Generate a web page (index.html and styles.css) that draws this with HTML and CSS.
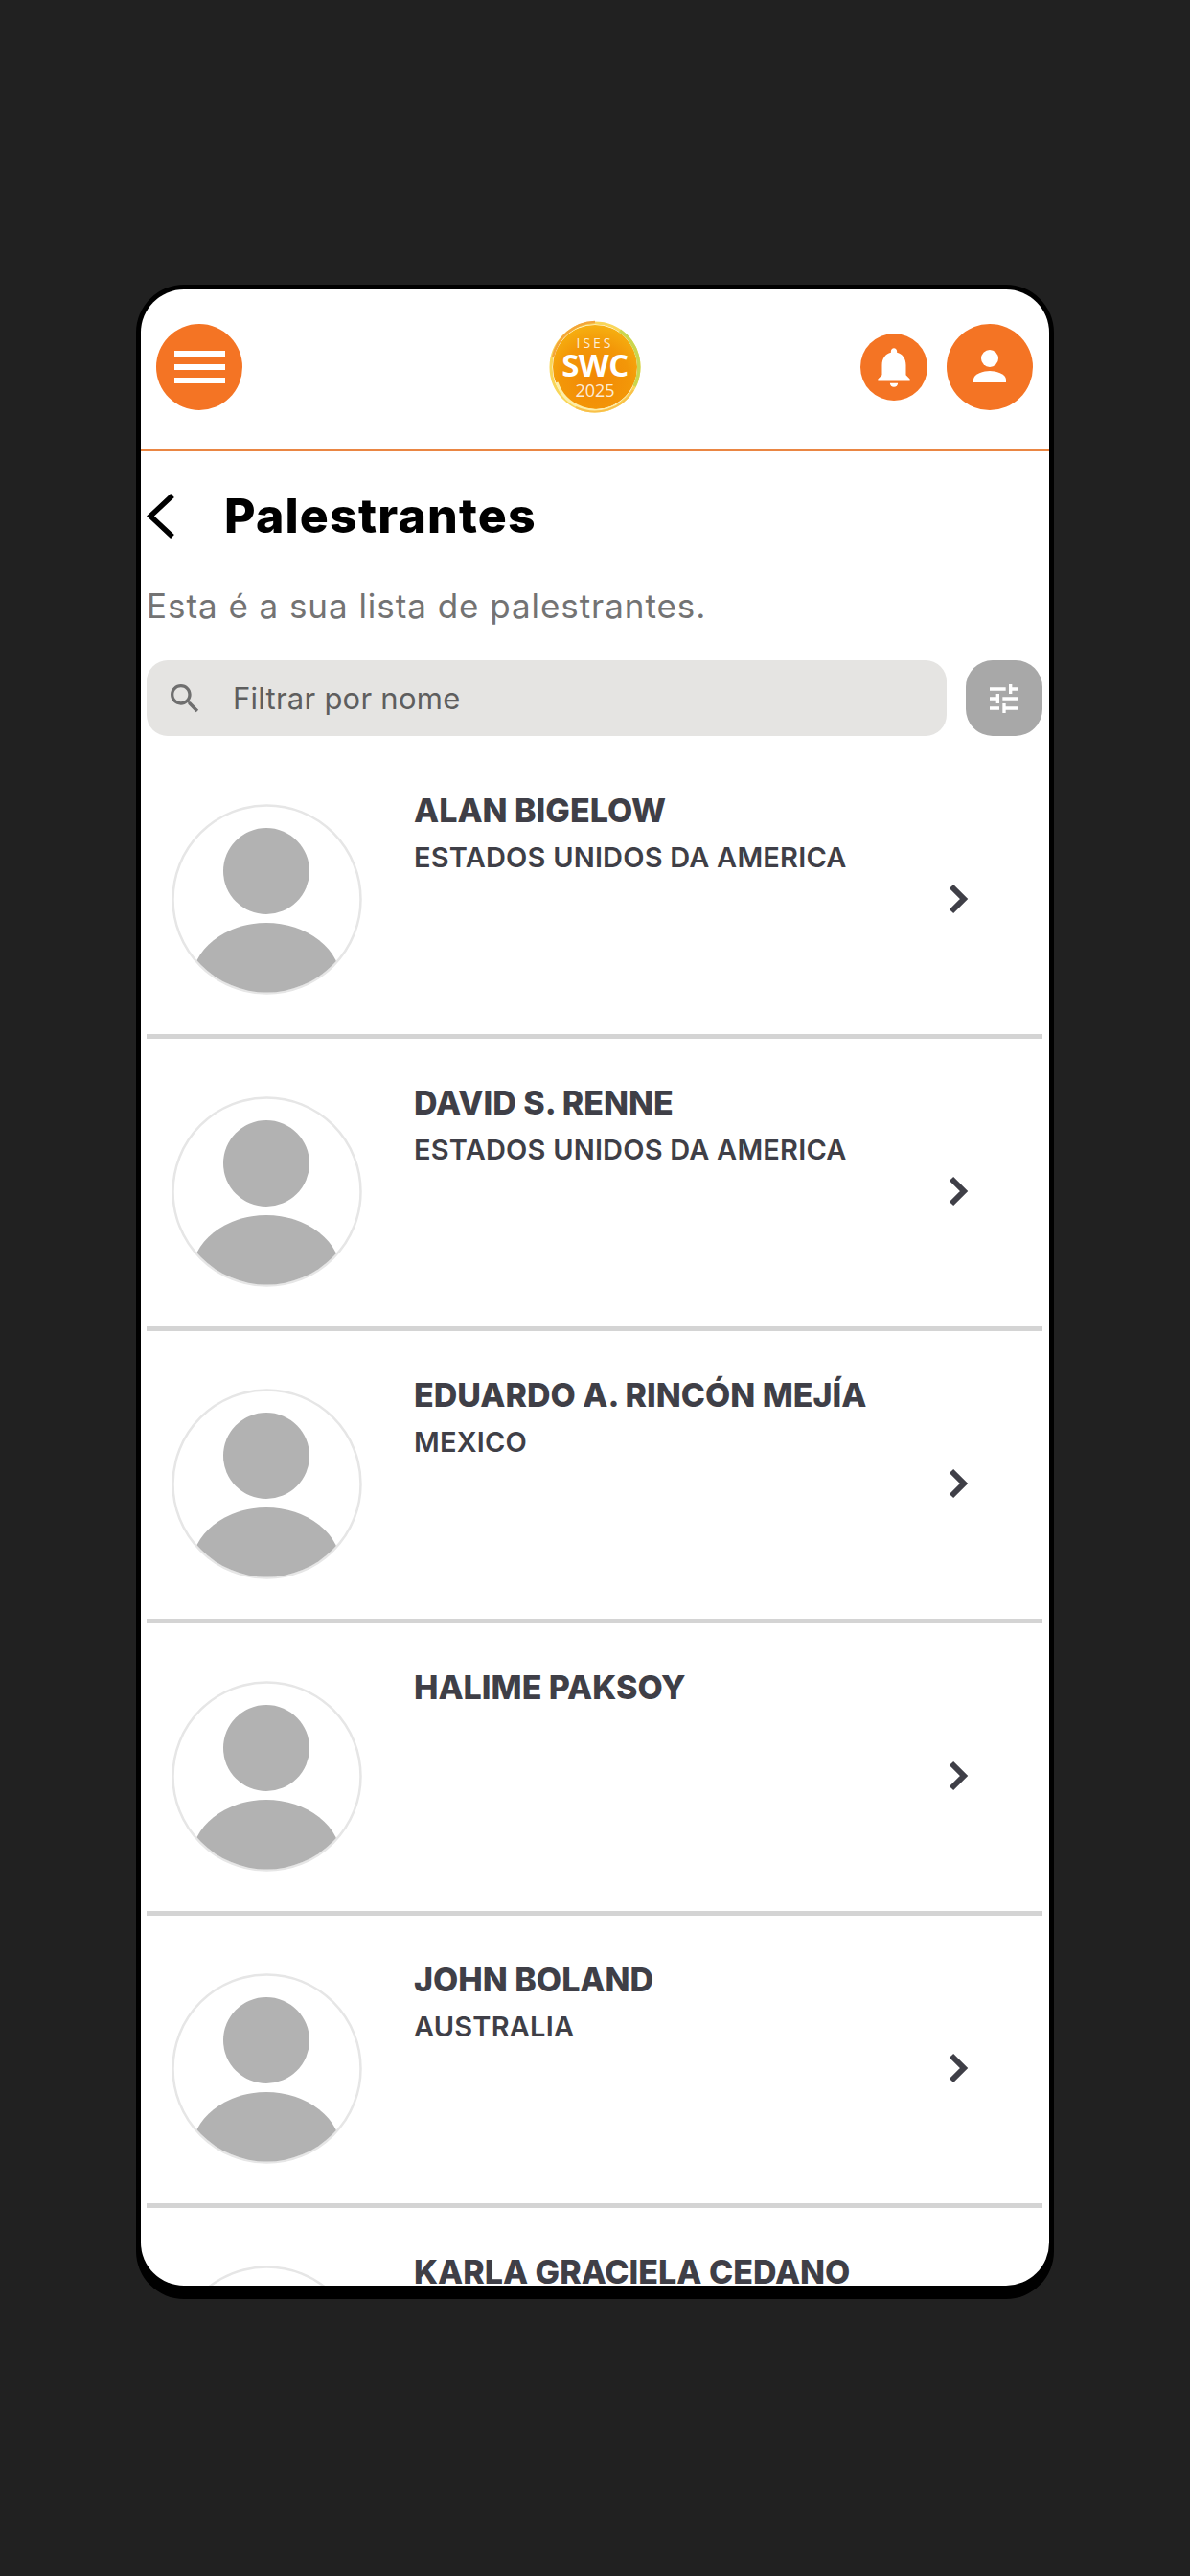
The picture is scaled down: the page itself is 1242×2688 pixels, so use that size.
FILE: index.html
```html
<!DOCTYPE html>
<html>
  <head>
    <meta charset="utf-8">
    <title>Palestrantes</title>
    <link rel="stylesheet" href="styles.css">
  </head>
  <body>
    <svg class="defs" width="0" height="0">
      <defs>
        <clipPath id="avatarClip"><circle cx="99.5" cy="99.5" r="97"></circle></clipPath>
        <symbol id="avatar" viewBox="0 0 199 199">
          <circle cx="99.5" cy="99.5" r="98" fill="#ffffff" stroke="#e6e6e6" stroke-width="2.5"></circle>
          <circle cx="99" cy="70" r="45" fill="#b2b2b2"></circle>
          <ellipse cx="99" cy="186" rx="78" ry="62" fill="#b2b2b2" clip-path="url(#avatarClip)"></ellipse>
        </symbol>
        <symbol id="chevron" viewBox="0 0 24 34">
          <polyline points="5,4 18,17 5,30" fill="none" stroke="#3f3f47" stroke-width="6"></polyline>
        </symbol>
        <radialGradient id="logoFill" cx="0.5" cy="0.65" r="0.7">
          <stop offset="0" stop-color="#f28805"></stop>
          <stop offset="0.6" stop-color="#f39708"></stop>
          <stop offset="1" stop-color="#f7b512"></stop>
        </radialGradient>
      </defs>
    </svg>

    <div class="phone">
      <div class="screen">
        <header class="topbar">
          <button class="round-btn menu-btn">
            <span></span>
            <span></span>
            <span></span>
          </button>
          <svg class="logo" viewBox="0 0 100 100">
            <circle cx="50" cy="50" r="44" fill="url(#logoFill)"></circle>
            <circle cx="50" cy="50" r="46" fill="none" stroke="#f9d659" stroke-width="3"></circle>
            <path d="M10 66 A44 44 0 0 0 74 89" fill="none" stroke="#fdeea8" stroke-width="3"></path>
            <path d="M76 12 A46 46 0 0 1 91 70" fill="none" stroke="#c9d64f" stroke-width="3.5"></path>
            <path d="M6 40 A46 46 0 0 1 50 3" fill="none" stroke="#f4a63a" stroke-width="2.5"></path>
            <path d="M30 92 A47 47 0 0 0 90 74" fill="none" stroke="#f9c04a" stroke-width="2"></path>
            <text class="logo-small" x="50" y="30">ISES</text>
            <text class="logo-big" x="50" y="60">SWC</text>
            <text class="logo-year" x="50" y="81">2025</text>
          </svg>
          <div class="top-actions">
            <button class="round-btn bell-btn">
              <svg viewBox="0 0 24 24" width="50" height="50"><path fill="#ffffff" d="M12 22c1.1 0 2-.9 2-2h-4c0 1.1.89 2 2 2zm6-6v-5c0-3.07-1.64-5.64-4.5-6.32V4c0-.83-.67-1.5-1.5-1.5s-1.5.67-1.5 1.5v.68C7.63 5.36 6 7.92 6 11v5l-2 2v1h16v-1l-2-2z"></path></svg>
            </button>
            <button class="round-btn user-btn">
              <svg viewBox="0 0 90 90" width="90" height="90">
                <circle cx="45" cy="36" r="9" fill="#ffffff"></circle>
                <path fill="#ffffff" d="M28 61v-3c0-6 11-9 17-9s17 3 17 9v3z"></path>
              </svg>
            </button>
          </div>
        </header>

        <main class="content">
          <div class="title-row">
            <svg class="back" viewBox="0 0 29 49" width="29" height="49">
              <polyline points="27,3 4,24.5 27,46" fill="none" stroke="#000000" stroke-width="5.5"></polyline>
            </svg>
            <h1>Palestrantes</h1>
          </div>
          <p class="intro">Esta é a sua lista de palestrantes.</p>

          <div class="search-row">
            <div class="search">
              <svg viewBox="0 0 24 24" width="40" height="40"><path fill="#6f6f6f" d="M15.5 14h-.79l-.28-.27C15.41 12.59 16 11.11 16 9.5 16 5.91 13.09 3 9.5 3S3 5.91 3 9.5 5.91 16 9.5 16c1.61 0 3.09-.59 4.23-1.57l.27.28v.79l5 4.99L20.49 19l-4.99-5zm-6 0C7.01 14 5 11.99 5 9.5S7.01 5 9.5 5 14 7.01 14 9.5 11.99 14 9.5 14z"></path></svg>
              <span>Filtrar por nome</span>
            </div>
            <button class="filter-btn">
              <svg viewBox="0 0 24 24" width="40" height="40"><path fill="#ffffff" d="M3 17v2h6v-2H3zM3 5v2h10V5H3zm10 16v-2h8v-2h-8v-2h-2v6h2zM7 9v2H3v2h4v2h2V9H7zm14 4v-2H11v2h10zm-6-4h2V7h4V5h-4V3h-2v6z"></path></svg>
            </button>
          </div>

          <div class="speakers">
            <div class="speaker">
              <svg class="avatar"><use href="#avatar"></use></svg>
              <div class="speaker-text">
                <div class="speaker-name">ALAN BIGELOW</div>
                <div class="speaker-country">ESTADOS UNIDOS DA AMERICA</div>
              </div>
              <svg class="arrow"><use href="#chevron"></use></svg>
            </div>
            <div class="speaker">
              <svg class="avatar"><use href="#avatar"></use></svg>
              <div class="speaker-text">
                <div class="speaker-name">DAVID S. RENNE</div>
                <div class="speaker-country">ESTADOS UNIDOS DA AMERICA</div>
              </div>
              <svg class="arrow"><use href="#chevron"></use></svg>
            </div>
            <div class="speaker">
              <svg class="avatar"><use href="#avatar"></use></svg>
              <div class="speaker-text">
                <div class="speaker-name">EDUARDO A. RINCÓN MEJÍA</div>
                <div class="speaker-country">MEXICO</div>
              </div>
              <svg class="arrow"><use href="#chevron"></use></svg>
            </div>
            <div class="speaker">
              <svg class="avatar"><use href="#avatar"></use></svg>
              <div class="speaker-text">
                <div class="speaker-name">HALIME PAKSOY</div>
              </div>
              <svg class="arrow"><use href="#chevron"></use></svg>
            </div>
            <div class="speaker">
              <svg class="avatar"><use href="#avatar"></use></svg>
              <div class="speaker-text">
                <div class="speaker-name">JOHN BOLAND</div>
                <div class="speaker-country">AUSTRALIA</div>
              </div>
              <svg class="arrow"><use href="#chevron"></use></svg>
            </div>
            <div class="speaker">
              <svg class="avatar"><use href="#avatar"></use></svg>
              <div class="speaker-text">
                <div class="speaker-name">KARLA GRACIELA CEDANO</div>
              </div>
              <svg class="arrow"><use href="#chevron"></use></svg>
            </div>
          </div>
        </main>
      </div>
    </div>
  </body>
</html>
```

FILE: styles.css
```css
body {
  margin: 0;
  height: 2688px;
  background-color: #212121;
  font-family: 'Inter', 'Noto Sans', sans-serif;
  overflow: hidden;
}

button {
  border: none;
  padding: 0;
  outline: none;
}

.defs {
  display: block;
  height: 0;
}

.phone {
  box-sizing: border-box;
  width: 958px;
  height: 2102px;
  margin: 297px 0 0 142px;
  background-color: #000000;
  border-style: solid;
  border-color: #000000;
  border-width: 5px 5px 14px 5px;
  border-radius: 50px;
}

.screen {
  height: 100%;
  background-color: #ffffff;
  border-radius: 45px;
  overflow: hidden;
}

.topbar {
  box-sizing: border-box;
  height: 169px;
  padding: 0 17px 4px 16px;
  border-bottom: 3px solid #ea8643;
  display: grid;
  grid-template-columns: 1fr auto 1fr;
  align-items: center;
}

.round-btn {
  background-color: #f47424;
  border-radius: 50%;
  display: flex;
  align-items: center;
  justify-content: center;
}

.menu-btn {
  width: 90px;
  height: 90px;
  flex-direction: column;
  gap: 8px;
}

.menu-btn span {
  display: block;
  width: 53px;
  height: 6px;
  background-color: #ffffff;
}

.logo {
  width: 100px;
  height: 100px;
  display: block;
}

.logo text {
  fill: #ffffff;
  text-anchor: middle;
  font-family: 'Open Sans', sans-serif;
}

.logo-small {
  font-size: 14px;
  letter-spacing: 3px;
  fill-opacity: 0.85;
}

.logo-big {
  font-size: 33px;
  font-weight: 700;
  letter-spacing: -0.5px;
}

.logo-year {
  font-size: 18px;
  fill-opacity: 0.85;
}

.top-actions {
  display: flex;
  justify-content: flex-end;
  align-items: center;
  gap: 20px;
}

.bell-btn {
  width: 70px;
  height: 70px;
}

.user-btn {
  width: 90px;
  height: 90px;
}

.content {
  padding: 0 7px 0 6px;
}

.title-row {
  height: 70px;
  margin-top: 32px;
  display: flex;
  align-items: center;
}

.back {
  margin-right: 52px;
}

h1 {
  margin: 0;
  font-size: 50px;
  font-weight: 800;
  color: #000000;
  letter-spacing: 1.2px;
}

.intro {
  margin: 34px 0 0 0;
  font-size: 35px;
  line-height: 50px;
  letter-spacing: 0.95px;
  color: #737373;
}

.search-row {
  margin-top: 32px;
  display: flex;
  gap: 20px;
}

.search {
  flex: 1;
  height: 79px;
  padding-left: 20px;
  background-color: #e5e4e2;
  border-radius: 22px;
  display: flex;
  align-items: center;
  gap: 30px;
}

.search span {
  font-size: 31px;
  letter-spacing: 0.25px;
  color: #5e5e5e;
}

.filter-btn {
  width: 80px;
  height: 79px;
  background-color: #a8a8a8;
  border-radius: 28px;
  display: flex;
  align-items: center;
  justify-content: center;
}

.speakers {
  margin-top: 11px;
}

.speaker {
  box-sizing: border-box;
  height: 305px;
  padding: 18px 76px 0 26px;
  border-bottom: 5px solid #d4d4d4;
  display: flex;
  align-items: center;
}

.avatar {
  width: 199px;
  height: 199px;
  flex-shrink: 0;
}

.speaker-text {
  flex: 1;
  align-self: flex-start;
  margin: 25px 0 0 54px;
  color: #3f3f47;
}

.speaker-name {
  font-size: 34px;
  line-height: 48px;
  font-weight: 800;
  white-space: nowrap;
}

.speaker-country {
  font-size: 29px;
  line-height: 50px;
  font-weight: 600;
  letter-spacing: 0.2px;
  white-space: nowrap;
}

.arrow {
  width: 24px;
  height: 34px;
  flex-shrink: 0;
}
```
